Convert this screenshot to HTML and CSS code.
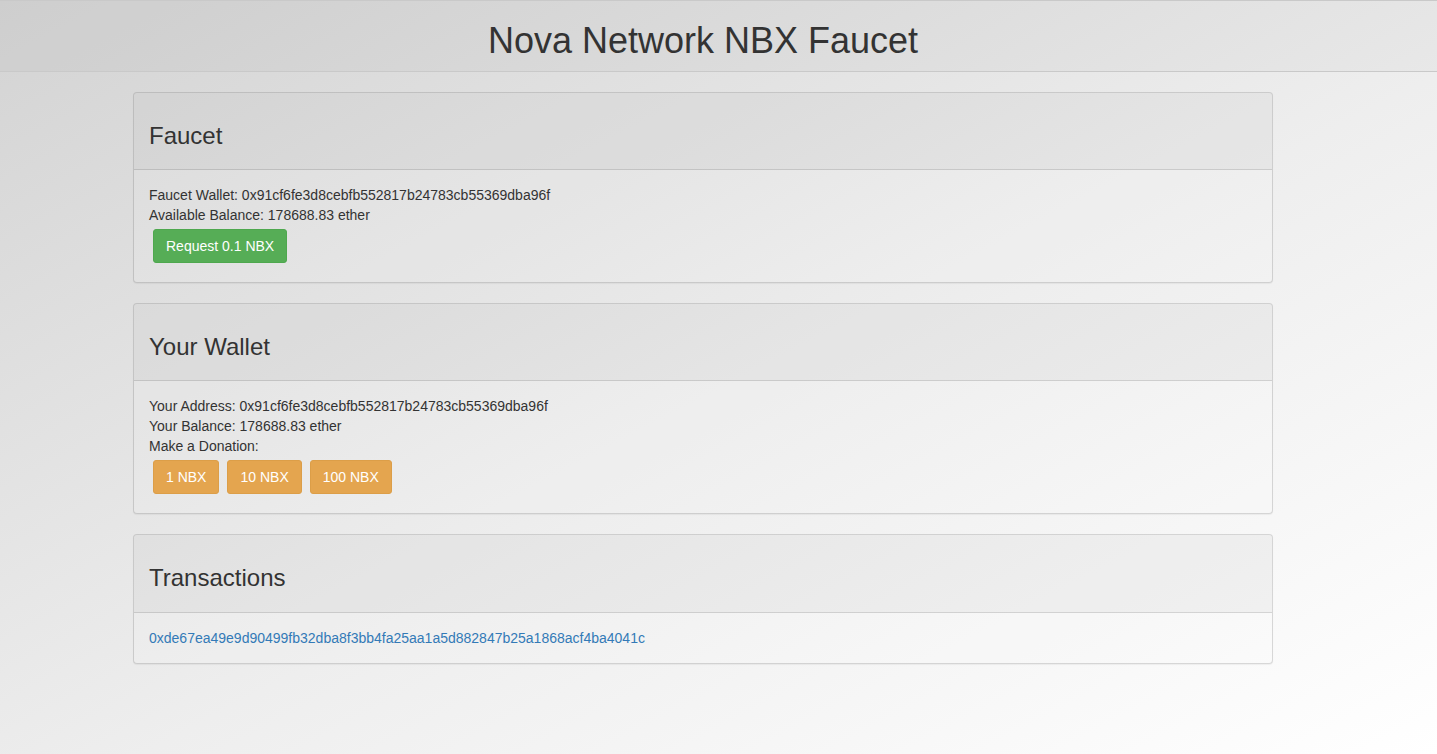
FILE: index.html
```html
<!DOCTYPE html>
<html lang="en">
<head>
<meta charset="utf-8">
<title>Nova Network NBX Faucet</title>
<link rel="stylesheet" href="styles.css">
</head>
<body>
<div class="page">
  <header class="topbar">
    <div class="topbar-inner">
      <h1 class="title">Nova Network NBX Faucet</h1>
    </div>
  </header>
  <main class="main">
    <div class="container">
      <section class="panel">
        <div class="panel-heading"><h3 class="panel-title">Faucet</h3></div>
        <div class="panel-body">
          <div class="line">Faucet Wallet: 0x91cf6fe3d8cebfb552817b24783cb55369dba96f</div>
          <div class="line">Available Balance: 178688.83 ether</div>
          <div class="btn-row">
            <button class="btn btn-success">Request 0.1 NBX</button>
          </div>
        </div>
      </section>
      <section class="panel">
        <div class="panel-heading"><h3 class="panel-title">Your Wallet</h3></div>
        <div class="panel-body">
          <div class="line">Your Address: 0x91cf6fe3d8cebfb552817b24783cb55369dba96f</div>
          <div class="line">Your Balance: 178688.83 ether</div>
          <div class="line">Make a Donation:</div>
          <div class="btn-row">
            <button class="btn btn-warning">1 NBX</button>
            <button class="btn btn-warning">10 NBX</button>
            <button class="btn btn-warning">100 NBX</button>
          </div>
        </div>
      </section>
      <section class="panel">
        <div class="panel-heading"><h3 class="panel-title">Transactions</h3></div>
        <div class="panel-body">
          <div class="line"><a class="tx" href="#">0xde67ea49e9d90499fb32dba8f3bb4fa25aa1a5d882847b25a1868acf4ba4041c</a></div>
        </div>
      </section>
    </div>
  </main>
</div>
</body>
</html>
```

FILE: styles.css
```css
* { box-sizing: border-box; }
html, body { margin: 0; padding: 0; height: 100%; }
body {
  font-family: "Liberation Sans", Arial, Helvetica, sans-serif;
  font-size: 14px;
  line-height: 20px;
  color: #333;
  background: linear-gradient(to bottom right, #d3d3d3 0%, #eeeeee 55%, #ffffff 100%);
  background-attachment: fixed;
  min-height: 754px;
}
.page { min-height: 754px; }
.topbar {
  border-top: 1px solid #c9c9c9;
  border-bottom: 1px solid #c9c9c9;
  background: rgba(0, 0, 0, 0.025);
}
.topbar-inner {
  padding-right: 31px;
  text-align: center;
}
.title {
  margin: 20px 0 10px;
  font-size: 36px;
  font-weight: 500;
  line-height: 1.1;
  color: #333;
}
.main {
  padding-right: 31px;
  padding-top: 20px;
}
.container {
  width: 1140px;
  margin: 0 auto;
}
.panel {
  border: 1px solid rgba(0, 0, 0, 0.14);
  border-radius: 4px;
  margin-bottom: 20px;
  box-shadow: 0 1px 1px rgba(0, 0, 0, 0.05);
  background: rgba(255, 255, 255, 0.1);
}
.panel-heading {
  padding: 10px 15px;
  border-bottom: 1px solid rgba(0, 0, 0, 0.12);
  background: rgba(0, 0, 0, 0.035);
  border-radius: 3px 3px 0 0;
}
.panel-title {
  margin: 20px 0 10px;
  font-size: 24px;
  font-weight: 500;
  line-height: 1.1;
  color: #333;
}
.panel-body { padding: 15px; }
.line { height: 20px; }
.btn-row { display: flex; }
.btn {
  font-family: "Liberation Sans", Arial, Helvetica, sans-serif;
  font-size: 14px;
  line-height: 20px;
  padding: 6px 12px;
  margin: 4px;
  border-radius: 3px;
  border: 1px solid transparent;
  color: #fff;
  cursor: pointer;
}
.btn-success {
  background: #56ad56;
  border-color: #4ea84e;
}
.btn-warning {
  background: #e4a54f;
  border-color: #dc9e48;
}
.tx {
  color: #337ab7;
  text-decoration: none;
}
```
